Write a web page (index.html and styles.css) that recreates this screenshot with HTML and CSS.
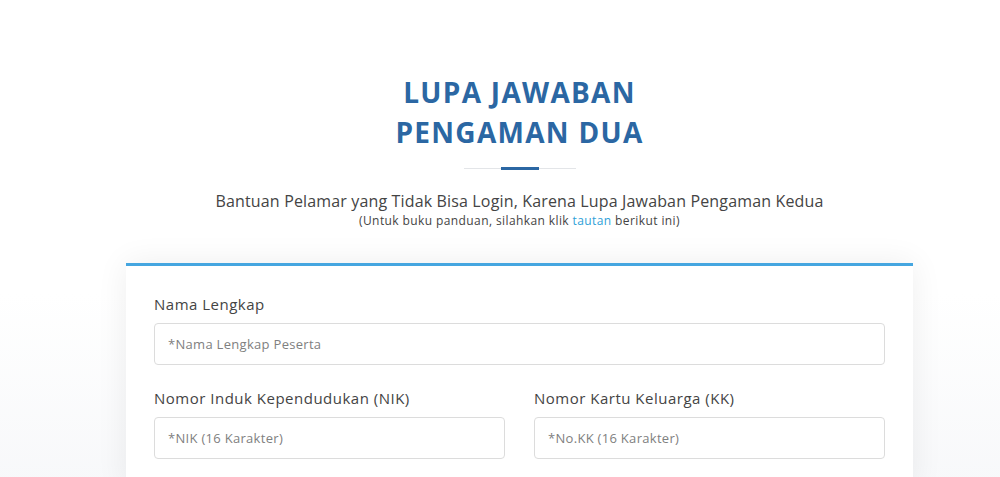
FILE: index.html
```html
<!DOCTYPE html>
<html lang="id">

<head>
    <meta charset="UTF-8">
    <meta name="viewport" content="width=device-width, initial-scale=1.0">
    <title>Lupa Jawaban Pengaman Dua</title>
    <link rel="stylesheet" href="styles.css">
</head>

<body>
    <div class="page">
        <div class="wrapper">
            <!-- judul -->
            <div class="heading">
                <h1>LUPA JAWABAN<br>PENGAMAN DUA</h1>
                <div class="divider"><span></span></div>
                <p class="lead">Bantuan Pelamar yang Tidak Bisa Login, Karena Lupa Jawaban Pengaman Kedua</p>
                <p class="note">(Untuk buku panduan, silahkan klik <a href="#">tautan</a> berikut ini)</p>
            </div>

            <!-- form -->
            <form class="card">
                <div class="field">
                    <label for="nama">Nama Lengkap</label>
                    <input type="text" id="nama" placeholder="*Nama Lengkap Peserta">
                </div>
                <div class="row">
                    <div class="field">
                        <label for="nik">Nomor Induk Kependudukan (NIK)</label>
                        <input type="text" id="nik" placeholder="*NIK (16 Karakter)">
                    </div>
                    <div class="field">
                        <label for="kk">Nomor Kartu Keluarga (KK)</label>
                        <input type="text" id="kk" placeholder="*No.KK (16 Karakter)">
                    </div>
                </div>
            </form>
        </div>
    </div>
</body>

</html>
```

FILE: styles.css
```css
/*Reset*/
* {
    margin: 0;
    padding: 0;
    box-sizing: border-box;
}

body,
html {
    font-family: 'Open Sans', 'Noto Sans', sans-serif;
    background-color: #ffffff;
    color: #444444;
    height: 100%;
    overflow: hidden;
}

.page {
    padding-left: 39px;
    background: linear-gradient(to bottom, #ffffff 60%, #f7f8fa 100%);
    min-height: 100%;
}

.wrapper {
    width: 787px;
    margin: 0 auto;
    padding-top: 72px;
}

/* Judul */
.heading {
    text-align: center;
}

.heading h1 {
    font-size: 28px;
    font-weight: 700;
    line-height: 40px;
    color: #2b67a3;
    letter-spacing: 1.3px;
}

.divider {
    width: 112px;
    height: 1px;
    background-color: #e3e5e8;
    margin: 16px auto 0;
    display: flex;
    justify-content: center;
    align-items: center;
}

.divider span {
    width: 38px;
    height: 3px;
    background-color: #2b67a3;
}

.lead {
    font-size: 16px;
    letter-spacing: 0.15px;
    color: #444444;
    margin-top: 21px;
    line-height: 22px;
}

.note {
    font-size: 12px;
    letter-spacing: 0.4px;
    color: #444444;
    line-height: 18px;
}

.note a {
    color: #2f9fd8;
    text-decoration: none;
}

/* Card form */
.card {
    margin-top: 33px;
    background-color: #ffffff;
    border-top: 3px solid #45a6e0;
    box-shadow: 0 0 30px rgba(0, 0, 0, 0.07);
    padding: 28px 28px 30px;
}

.row {
    display: flex;
    gap: 29px;
    margin-top: 23px;
}

.row .field {
    flex: 1;
}

.field label {
    display: block;
    font-size: 15px;
    letter-spacing: 0.5px;
    color: #444444;
    line-height: 20px;
    margin-bottom: 9px;
}

.field input {
    display: block;
    width: 100%;
    height: 42px;
    border: 1px solid #dcdcdc;
    border-radius: 4px;
    padding: 0 13px;
    font-family: inherit;
    font-size: 13px;
    letter-spacing: 0.3px;
    color: #444444;
    outline: none;
}

.field input::placeholder {
    color: #808080;
}
```
